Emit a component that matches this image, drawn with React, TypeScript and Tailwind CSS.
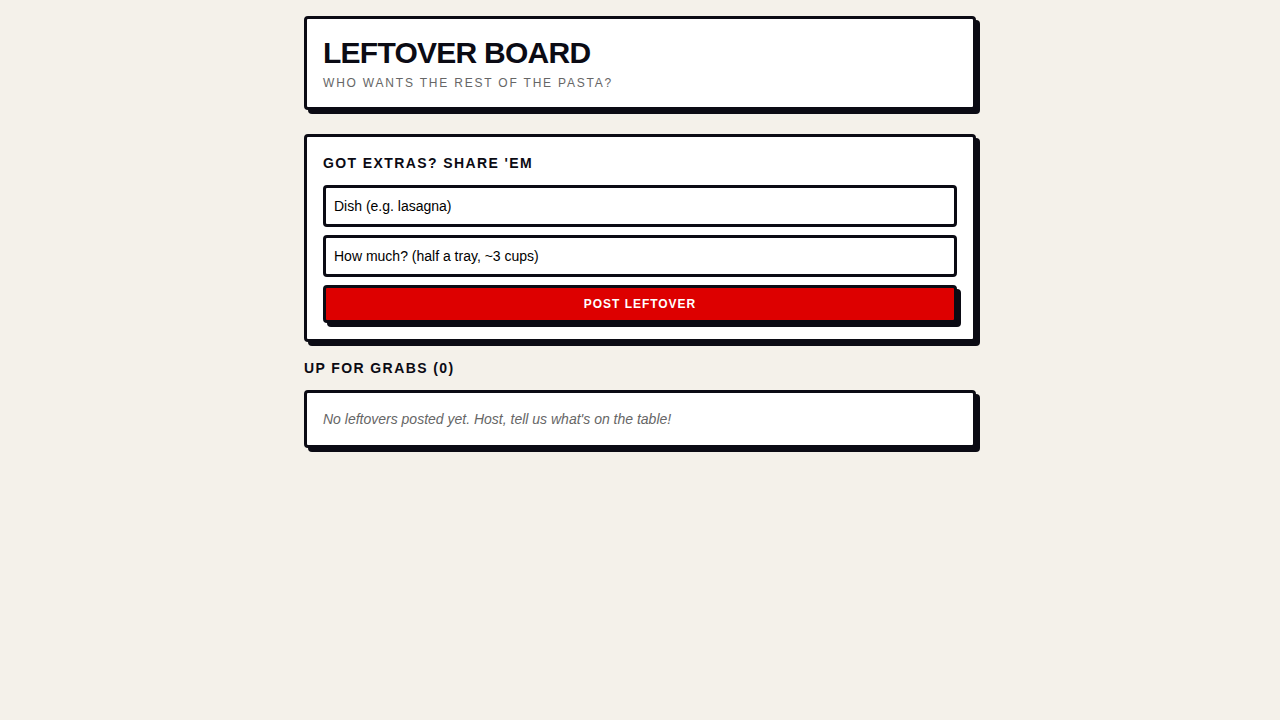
export default function App() {
  return (
    <div className="min-h-screen w-full bg-[#f4f1ea] text-[#0b0b14]" style={{ fontFamily: '"Liberation Sans", Arial, sans-serif' }}>
      <div className="mx-auto w-[672px] pt-4">
        <div className="mb-6 rounded-[4px] border-[3px] border-[#0b0b14] bg-white p-4 shadow-[4px_4px_0_#0b0b14]">
          <h1 className="text-[30px] font-bold leading-9 tracking-tight">LEFTOVER BOARD</h1>
          <p className="mt-1 text-xs uppercase tracking-[0.15em] text-[#666]">Who wants the rest of the pasta?</p>
        </div>
        <div className="mb-4 rounded-[4px] border-[3px] border-[#0b0b14] bg-white p-4 shadow-[4px_4px_0_#0b0b14]">
          <h2 className="mb-3 text-sm font-bold leading-5 tracking-widest">GOT EXTRAS? SHARE 'EM</h2>
          <div className="flex flex-col gap-2">
            <input
              className="w-full rounded-[4px] border-[3px] border-[#0b0b14] bg-white px-2 py-2 text-sm leading-5 text-black outline-none placeholder:text-black"
              placeholder="Dish (e.g. lasagna)"
            />
            <input
              className="w-full rounded-[4px] border-[3px] border-[#0b0b14] bg-white px-2 py-2 text-sm leading-5 text-black outline-none placeholder:text-black"
              placeholder="How much? (half a tray, ~3 cups)"
            />
            <button className="w-full rounded-[4px] border-[3px] border-[#0b0b14] bg-[#dd0000] py-2 text-xs font-bold leading-4 tracking-[0.08em] text-white shadow-[4px_4px_0_#0b0b14]">
              POST LEFTOVER
            </button>
          </div>
        </div>
        <h2 className="mb-3 text-sm font-bold leading-5 tracking-widest">UP FOR GRABS (0)</h2>
        <div className="rounded-[4px] border-[3px] border-[#0b0b14] bg-white p-4 shadow-[4px_4px_0_#0b0b14]">
          <p className="text-sm italic leading-5 text-[#666]">No leftovers posted yet. Host, tell us what's on the table!</p>
        </div>
      </div>
    </div>
  );
}
